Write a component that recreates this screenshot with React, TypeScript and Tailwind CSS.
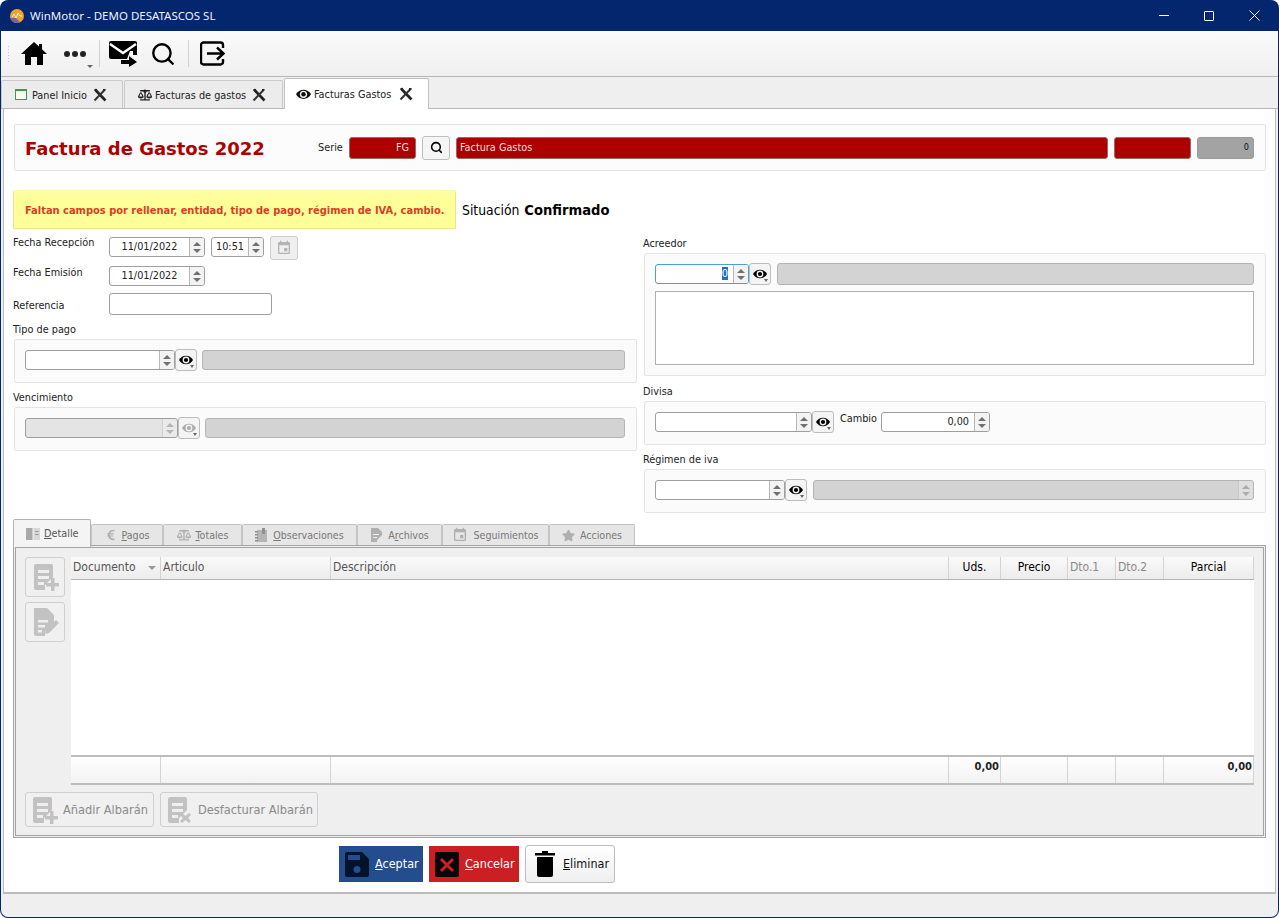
import { ReactNode } from "react";
import { FaBalanceScale, FaEuroSign, FaStar } from "react-icons/fa";
import { MdEvent } from "react-icons/md";
import { Search } from "lucide-react";

const CloseTool = () => (
  <svg width="14" height="14" viewBox="0 0 14 14" className="shrink-0">
    <path d="M2 1.500 12.500 12.500" stroke="#222" strokeWidth="2.600" />
    <path d="M12 1.500 1.500 12.500" stroke="#333" strokeWidth="2" />
    <path d="M1 1l3 0 0 3z M13 1l-3 0 0 3z" fill="#222" />
  </svg>
);

const EyeIcon = ({ w = 14, className = "" }: { w?: number; className?: string }) => (
  <svg width={w} height={(w * 10) / 14} viewBox="0 0 14 10" className={`shrink-0 ${className}`}>
    <path d="M0 5C3-.7 11-.7 14 5 11 10.700 3 10.700 0 5z" fill="currentColor" />
    <circle cx="7" cy="5" r="3.400" fill="#f4f4f4" />
    <circle cx="7" cy="5" r="2.100" fill="currentColor" />
  </svg>
);

const Arrows = ({ light }: { light?: boolean }) => (
  <div
    className={`flex h-full w-[15px] shrink-0 flex-col items-center justify-center gap-[3px] border-l border-[#b8b8b8] bg-[#f3f3f3] ${
      light ? "opacity-40" : ""
    }`}
  >
    <div className="h-0 w-0 border-x-[4px] border-b-[4px] border-x-transparent border-b-[#707070]" />
    <div className="h-0 w-0 border-x-[4px] border-t-[4px] border-x-transparent border-t-[#707070]" />
  </div>
);

const Spin = ({
  w,
  value,
  disabled,
  focused,
  align = "center",
  className = "",
}: {
  w: number;
  value?: ReactNode;
  disabled?: boolean;
  focused?: boolean;
  align?: "center" | "right";
  className?: string;
}) => (
  <div
    className={`flex h-[20px] shrink-0 items-center overflow-hidden rounded-[3px] border ${
      focused ? "border-[#4a9be8]" : "border-[#9e9e9e]"
    } ${disabled ? "bg-[#e4e4e4]" : "bg-white"} ${className}`}
    style={{ width: w }}
  >
    <div className={`flex-1 pt-px ${align === "right" ? "pr-[5px] text-right" : "text-center"}`}>{value}</div>
    <Arrows light={disabled} />
  </div>
);

const EyeBtn = ({ disabled }: { disabled?: boolean }) => (
  <div
    className={`relative flex h-[22px] w-[22px] shrink-0 items-center justify-center rounded-[3px] border border-[#bdbdbd] bg-[#f4f4f4] ${
      disabled ? "text-[#aaa]" : "text-black"
    }`}
  >
    <EyeIcon />
    <div className="absolute bottom-[2px] right-[2px] h-0 w-0 border-x-[2.500px] border-t-[3px] border-x-transparent border-t-[#666]" />
  </div>
);

const Bar = ({ children }: { children?: ReactNode }) => (
  <div className="flex h-full min-w-0 flex-1 items-center justify-end overflow-hidden rounded-[3px] border border-[#b4b4b4] bg-[#d3d3d3]">
    {children}
  </div>
);

const Label = ({ children, className = "" }: { children: ReactNode; className?: string }) => (
  <div className={`h-[14px] leading-[14px] ${className}`}>{children}</div>
);

const Card = ({ h, children, className = "" }: { h: number; children: ReactNode; className?: string }) => (
  <div
    className={`rounded-[2px] border border-[#e4e4e4] bg-[#fbfbfb] pl-[10px] pr-[11px] pt-[9px] ${className}`}
    style={{ height: h }}
  >
    {children}
  </div>
);

const DocIcon = ({ kind }: { kind: "plus" | "edit" | "x" }) => (
  <svg width="30" height="30" viewBox="0 0 30 30" className="shrink-0">
    {kind === "edit" ? (
      <path d="M4 1h13l7 7v8l-9 9v4H6a2 2 0 0 1-2-2z" fill="#c2c2c2" />
    ) : (
      <path d="M6 2h15a2 2 0 0 1 2 2v11l-8 8v5H6a2 2 0 0 1-2-2V4a2 2 0 0 1 2-2z" fill="#c2c2c2" />
    )}
    {kind !== "edit" && <path d="M8 8h11v3H8zM8 14h11v3H8zM8 20h6v3H8z" fill="#efefef" />}
    {kind === "edit" && <path d="M8 13h10v2.500H8zM8 18h7v2.500H8zM8 23h4v2.500H8z" fill="#efefef" />}
    {kind === "plus" && <path d="M21 16h3.500v5H29v3.500h-4.500V29H21v-4.500h-5V21h5z" fill="#c2c2c2" />}
    {kind === "edit" && <path d="M26 13l3 3-10 10-4 1 1-4z" fill="#c2c2c2" />}
    {kind === "x" && <path d="M18 18l3.500 3 3.500-3 2 2-3 3 3 3-2 2-3.500-3-3.500 3-2-2 3-3-3-3z" fill="#c2c2c2" />}
  </svg>
);

const topTabs = [
  {
    text: "Panel Inicio",
    w: 122,
    ml: 0,
    icon: <div className="mr-[5px] h-[11px] w-[12px] border-[1.500px] border-t-[2.500px] border-[#3c9a48] bg-[#f6fbf4]" />,
  },
  { text: "Facturas de gastos", w: 159, ml: 1, icon: <FaBalanceScale size={14} className="mr-[3px] text-[#222]" /> },
];

const lowerTabs = [
  { key: "pagos", w: 72, pre: "", u: "P", post: "agos", icon: <FaEuroSign size={12} /> },
  { key: "totales", w: 79, pre: "", u: "T", post: "otales", icon: <FaBalanceScale size={14} /> },
  {
    key: "obs",
    w: 115,
    pre: "",
    u: "O",
    post: "bservaciones",
    icon: (
      <svg width="13" height="15" viewBox="0 0 13 15">
        <path d="M2 2h10v12H2z" fill="#b5b5b5" />
        <path d="M0 3h3v1.500H0zM0 6h3v1.500H0zM0 9h3v1.500H0zM0 12h3v1.500H0zM7 0h3v6H7z" fill="#8f8f8f" />
      </svg>
    ),
  },
  {
    key: "archivos",
    w: 85,
    pre: "A",
    u: "r",
    post: "chivos",
    icon: (
      <svg width="13" height="15" viewBox="0 0 13 15">
        <path d="M1 0h7l4 4v3l-5 5v2H1z" fill="#b0b0b0" />
        <path d="M3 6h6v1H3zM3 9h4v1H3z" fill="#eee" />
      </svg>
    ),
  },
  { key: "seg", w: 107, pre: "Seguimientos", u: "", post: "", icon: <MdEvent size={16} /> },
  { key: "acc", w: 86, pre: "Acciones", u: "", post: "", icon: <FaStar size={13} /> },
];

const columns = [
  { w: 90, text: "Documento", cls: "pl-[2px] text-[#555]", footer: "" },
  { w: 170, text: "Articulo", cls: "pl-[2px] text-[#555]", footer: "" },
  { w: 618, text: "Descripción", cls: "pl-[2px] text-[#555]", footer: "" },
  { w: 52, text: "Uds.", cls: "justify-center text-black", footer: "0,00" },
  { w: 67, text: "Precio", cls: "justify-center text-black", footer: "" },
  { w: 48, text: "Dto.1", cls: "pl-[2px] text-[#8a8a8a]", footer: "" },
  { w: 48, text: "Dto.2", cls: "pl-[2px] text-[#8a8a8a]", footer: "" },
  { w: 90, text: "Parcial", cls: "justify-center text-black", footer: "0,00" },
];

export default function App() {
  return (
    <div className="flex h-[918px] w-[1279px] flex-col overflow-hidden rounded-[8px] bg-[#04266e] font-['DejaVu_Sans_Condensed','Liberation_Sans',sans-serif] text-[10.800px] text-[#222]">
      {/* Title bar */}
      <div className="flex h-[31px] shrink-0 items-center pl-[10px] pr-[19px] text-white">
        <svg width="14" height="14" viewBox="0 0 14 14" className="shrink-0">
          <circle cx="7" cy="7" r="7" fill="#f0a22e" />
          <path d="M0.500 9A7 7 0 0 0 7 14a7 7 0 0 0 3-.7L6 9z" fill="#7b62a8" />
          <path d="M2 8l2-3 2 4 2-5 2 3h2" stroke="#fff3c8" strokeWidth="1" fill="none" />
        </svg>
        <span className="ml-[6px] font-['Noto_Sans',sans-serif] text-[11.500px] text-[#eef1f8]">
          WinMotor - DEMO DESATASCOS SL
        </span>
        <div className="ml-auto flex items-center gap-[35px]">
          <div className="h-px w-[10px] bg-white" />
          <div className="h-[10px] w-[10px] rounded-[1px] border border-white" />
          <svg width="11" height="11" viewBox="0 0 11 11">
            <path d="M0.500 0.500l10 10M10.500 0.500l-10 10" stroke="#fff" strokeWidth="1" />
          </svg>
        </div>
      </div>

      <div className="mx-px mb-px flex min-h-0 flex-1 flex-col overflow-hidden rounded-b-[7px] bg-[#efefef]">
        {/* Toolbar */}
        <div className="flex h-[46px] shrink-0 items-center border-b border-[#b8b8b8] bg-gradient-to-b from-[#fbfbfb] to-[#efefef] pl-[6px]">
          <div className="h-[18px] w-[4px] bg-[radial-gradient(#c8c8c8_0.700px,transparent_0.800px)] bg-[length:3px_3px]" />
          <svg width="26" height="23" viewBox="0 0 26 23" className="ml-[10px] shrink-0">
            <path d="M13 0l5 4.500V2h3v5.300L26 12h-4v11h-6v-8h-6v8H4V12H0z" fill="#000" />
          </svg>
          <div className="relative ml-[17px] flex h-[30px] w-[35px] items-center gap-[2px]">
            <div className="h-[6px] w-[6px] rounded-full bg-[#222]" />
            <div className="h-[6px] w-[6px] rounded-full bg-[#222]" />
            <div className="h-[6px] w-[6px] rounded-full bg-[#222]" />
            <div className="absolute bottom-[1px] right-[6px] h-0 w-0 border-x-[3px] border-t-[3px] border-x-transparent border-t-[#666]" />
          </div>
          <div className="h-[27px] w-px bg-[#d0d0d0]" />
          <svg width="29" height="26" viewBox="0 0 29 26" className="ml-[9px] shrink-0">
            <path d="M2 0h24a2 2 0 0 1 2 2v12h-4v-4h-3l-3 8H2a2 2 0 0 1-2-2V2a2 2 0 0 1 2-2z" fill="#000" />
            <path d="M1 3l13 9 13-9" stroke="#fff" strokeWidth="2.400" fill="none" />
            <path d="M12 19h8v-4l8 6-8 5v-3h-8z" fill="#000" />
          </svg>
          <Search size={26} strokeWidth={2.200} className="ml-[12px] text-black" />
          <div className="ml-[12px] h-[27px] w-px bg-[#d0d0d0]" />
          <svg width="25" height="25" viewBox="0 0 25 25" className="ml-[11px] shrink-0">
            <path d="M23 7V4a2.500 2.500 0 0 0-2.500-2.500h-17A2.500 2.500 0 0 0 1 4v17a2.500 2.500 0 0 0 2.500 2.500h17A2.500 2.500 0 0 0 23 21v-3" stroke="#000" strokeWidth="2.400" fill="none" />
            <path d="M7 12.500h16M17 6.500l6.500 6-6.500 6" stroke="#000" strokeWidth="2.400" fill="none" />
          </svg>
        </div>

        {/* Window tabs */}
        <div className="flex h-[32px] shrink-0 items-end border-b border-[#b8b8b8]">
          {topTabs.map((t) => (
            <div
              key={t.text}
              className="flex h-[28px] items-center rounded-t-[2px] border border-b-0 border-[#c8c8c8] bg-[#ececec] pl-[13px]"
              style={{ width: t.w, marginLeft: t.ml }}
            >
              {t.icon}
              <span className="mr-[6px] whitespace-nowrap pt-[3px]">{t.text}</span>
              <CloseTool />
            </div>
          ))}
          <div className="relative top-px ml-px flex h-[31px] w-[145px] items-center rounded-t-[2px] border border-b-0 border-[#c0c0c0] bg-white pl-[11px]">
            <EyeIcon w={15} className="mr-[3px] text-[#111]" />
            <span className="mr-[8px] whitespace-nowrap pt-[3px]">Facturas Gastos</span>
            <CloseTool />
          </div>
        </div>

        {/* Main pane */}
        <div className="ml-[2px] mr-[2px] flex h-[785px] shrink-0 flex-col border-x border-b-2 border-[#bcbcbc] bg-white">
          {/* Header */}
          <div className="ml-[10px] mt-[15px] flex h-[47px] w-[1252px] shrink-0 items-center rounded-[2px] border border-[#e2e2e2] bg-[#fcfcfc] pl-[10px]">
            <div className="w-[293px] pt-[2px] font-['DejaVu_Sans',sans-serif] text-[18px] font-bold text-[#ad0000]">
              Factura de Gastos 2022
            </div>
            <span className="w-[31px] pt-px">Serie</span>
            <div className="flex h-[22px] w-[67px] items-center justify-end rounded-[3px] border border-[#9a6a6a] bg-[#ad0000] pr-[6px] pt-[2px] text-[#f0d8d8]">
              FG
            </div>
            <div className="ml-[6px] flex h-[24px] w-[28px] items-center justify-center rounded-[3px] border border-[#bdbdbd] bg-[#f5f5f5]">
              <Search size={13} strokeWidth={2.800} className="text-black" />
            </div>
            <div className="ml-[6px] flex h-[22px] w-[652px] items-center rounded-[3px] border border-[#9a6a6a] bg-[#ad0000] pl-[3px] pt-[2px] text-[#f4dede]">
              Factura Gastos
            </div>
            <div className="ml-[6px] h-[22px] w-[77px] rounded-[3px] border border-[#9a6a6a] bg-[#ad0000]" />
            <div className="ml-[6px] flex h-[22px] w-[57px] items-center justify-end rounded-[3px] border border-[#9a9a9a] bg-[#a3a3a3] pr-[4px] pt-px text-[9px] text-[#012]">
              0
            </div>
          </div>

          {/* Warning */}
          <div className="ml-[9px] mt-[19px] flex shrink-0 items-center">
            <div className="flex h-[39px] w-[443px] items-center whitespace-nowrap border border-t-[4px] border-[#e8e48f] border-t-[#fdfda8] bg-[#ffff99] pl-[11px] text-[11px] font-bold text-[#dc3c26]">
              Faltan campos por rellenar, entidad, tipo de pago, régimen de IVA, cambio.
            </div>
            <div className="ml-[6px] mt-px text-[13.800px] text-black">
              Situación <span className="ml-px text-[14.600px] font-bold">Confirmado</span>
            </div>
          </div>

          {/* Form columns */}
          <div className="mt-[7px] flex h-[277px] shrink-0">
            <div className="ml-[9px] w-[624px]">
              <div className="flex h-[24px]">
                <Label className="w-[96px] shrink-0">Fecha Recepción</Label>
                <Spin w={96} value="11/01/2022" className="mt-px" />
                <Spin w={53} value="10:51" className="ml-[6px] mt-px" />
                <div className="ml-[6px] flex h-[24px] w-[28px] items-center justify-center rounded-[3px] border border-[#cfcfcf] bg-[#efefef] text-[#b4b4b4]">
                  <MdEvent size={16} />
                </div>
              </div>
              <div className="mt-[6px] flex h-[22px]">
                <Label className="w-[96px] shrink-0">Fecha Emisión</Label>
                <Spin w={96} value="11/01/2022" />
              </div>
              <div className="mt-[5px] flex h-[22px]">
                <Label className="mt-[6px] w-[96px] shrink-0">Referencia</Label>
                <div className="h-[22px] w-[163px] rounded-[3px] border border-[#9e9e9e] bg-white" />
              </div>
              <Label className="mt-[7px] pt-px">Tipo de pago</Label>
              <Card h={44} className="ml-px mt-[3px]">
                <div className="flex items-start">
                  <Spin w={150} className="mt-px" />
                  <EyeBtn />
                  <div className="ml-[5px] mt-px flex h-[20px] min-w-0 flex-1"><Bar /></div>
                </div>
              </Card>
              <Label className="mt-[7px] pt-px">Vencimiento</Label>
              <Card h={44} className="ml-px mt-[3px]">
                <div className="flex items-start">
                  <Spin w={153} disabled className="mt-px" />
                  <EyeBtn disabled />
                  <div className="ml-[5px] mt-px flex h-[20px] min-w-0 flex-1"><Bar /></div>
                </div>
              </Card>
            </div>

            <div className="ml-[6px] w-[623px]">
              <Label className="pt-px">Acreedor</Label>
              <Card h={123} className="ml-px mt-[3px]">
                <div className="flex items-start">
                  <Spin
                    w={94}
                    focused
                    align="right"
                    className="mt-px"
                    value={<span className="bg-[#1d6fd0] text-white">0</span>}
                  />
                  <EyeBtn />
                  <div className="ml-[6px] flex h-[22px] min-w-0 flex-1"><Bar /></div>
                </div>
                <div className="mt-[6px] h-[74px] border border-[#b0b0b0] bg-white" />
              </Card>
              <Label className="mt-[8px] pt-px">Divisa</Label>
              <Card h={44} className="ml-px mt-[3px]">
                <div className="flex items-start">
                  <Spin w={157} className="mt-px" />
                  <EyeBtn />
                  <Label className="ml-[6px] w-[41px] pt-px">Cambio</Label>
                  <Spin w={109} value="0,00" align="right" className="mt-px" />
                </div>
              </Card>
              <Label className="mt-[7px] pt-px">Régimen de iva</Label>
              <Card h={44} className="ml-px mt-[3px]">
                <div className="flex items-start">
                  <Spin w={130} className="mt-px" />
                  <EyeBtn />
                  <div className="ml-[6px] mt-px flex h-[20px] min-w-0 flex-1">
                    <Bar>
                      <Arrows light />
                    </Bar>
                  </div>
                </div>
              </Card>
            </div>
          </div>

          {/* Detail tabs */}
          <div className="ml-[9px] mt-[6px] flex h-[26px] w-[1253px] shrink-0 items-end">
            <div className="relative top-[2px] z-10 flex h-[28px] w-[78px] items-center rounded-t-[2px] border border-b-0 border-[#b4b4b4] bg-[#f4f4f4] pl-[12px] text-[#555]">
              <svg width="14" height="12" viewBox="0 0 14 12" className="mr-[4px]">
                <path d="M0 0h6.500v12H0z" fill="#a8a8a8" />
                <path d="M7.500 0H14v12H7.500z" fill="#d8d8d8" />
                <path d="M9 3h3.500v1H9zM9 6h3.500v1H9z" fill="#999" />
              </svg>
              <span className="pt-px"><u>D</u>etalle</span>
            </div>
            {lowerTabs.map((t) => (
              <div
                key={t.key}
                className="flex h-[21px] shrink-0 items-center justify-center gap-[5px] rounded-t-[2px] border border-b-0 border-[#c4c4c4] bg-[#e6e6e6] text-[10.600px] text-[#777]"
                style={{ width: t.w }}
              >
                <span className="flex text-[#b0b0b0]">{t.icon}</span>
                <span className="whitespace-nowrap pt-[2px]">
                  {t.pre}
                  {t.u && <u>{t.u}</u>}
                  {t.post}
                </span>
              </div>
            ))}
          </div>

          <div className="ml-[9px] flex h-[293px] w-[1253px] shrink-0 flex-col border-[3px] border-double border-[#a4a4a4] bg-[#efefef] px-[9px] pt-[9px]">
            <div className="flex h-[228px] shrink-0 gap-[6px]">
              <div className="flex w-[40px] shrink-0 flex-col gap-[5px]">
                <div className="flex h-[40px] items-center justify-center rounded-[3px] border border-[#cfcfcf] bg-[#f0f0f0]">
                  <DocIcon kind="plus" />
                </div>
                <div className="flex h-[40px] items-center justify-center rounded-[3px] border border-[#cfcfcf] bg-[#f0f0f0]">
                  <DocIcon kind="edit" />
                </div>
              </div>
              <div className="flex w-[1183px] shrink-0 flex-col text-[12px]">
                <div className="flex h-[23px] shrink-0 border-b border-[#b4b4b4] bg-gradient-to-b from-[#fafafa] to-[#ececec]">
                  {columns.map((c) => (
                    <div
                      key={c.text}
                      className={`relative flex h-full shrink-0 items-center border-r border-[#d4d4d4] pb-[2px] ${c.cls}`}
                      style={{ width: c.w }}
                    >
                      {c.text}
                      {c.text === "Documento" && (
                        <div className="absolute right-[4px] top-[9px] h-0 w-0 border-x-[4px] border-t-[4px] border-x-transparent border-t-[#999]" />
                      )}
                    </div>
                  ))}
                </div>
                <div className="flex-1 bg-white" />
                <div className="flex h-[30px] shrink-0 border-y-2 border-[#bdbdbd] bg-gradient-to-b from-white to-[#f2f2f2] text-[11px]">
                  {columns.map((c) => (
                    <div
                      key={c.text}
                      className="h-full shrink-0 border-r border-[#d4d4d4] pr-px pt-[2px] text-right font-bold"
                      style={{ width: c.w }}
                    >
                      {c.footer}
                    </div>
                  ))}
                </div>
              </div>
            </div>
            <div className="mt-[7px] flex gap-[6px] whitespace-nowrap text-[12.700px] text-[#8a8a8a]">
              <div className="flex h-[35px] w-[129px] items-center gap-[4px] rounded-[3px] border border-[#cfcfcf] bg-[#f0f0f0] pl-[3px]">
                <DocIcon kind="plus" />
                <span className="pt-px">Añadir Albarán</span>
              </div>
              <div className="flex h-[35px] w-[158px] items-center gap-[4px] rounded-[3px] border border-[#cfcfcf] bg-[#f0f0f0] pl-[3px]">
                <DocIcon kind="x" />
                <span className="pt-px">Desfacturar Albarán</span>
              </div>
            </div>
          </div>

          {/* Actions */}
          <div className="ml-[335px] mt-[7px] flex h-[38px] shrink-0 items-center gap-[6px] text-[12.500px]">
            <div className="flex h-[36px] w-[84px] items-center bg-[#234d8c] pl-[6px] text-white">
              <svg width="24" height="25" viewBox="0 0 24 25" className="mr-[6px] shrink-0">
                <path d="M2 0h15l7 7v16a2 2 0 0 1-2 2H2a2 2 0 0 1-2-2V2a2 2 0 0 1 2-2z" fill="#04122c" />
                <path d="M3 3h12v5H3z" fill="#234d8c" />
                <circle cx="12" cy="17.500" r="3.500" fill="#234d8c" />
              </svg>
              <span className="pt-px"><u>A</u>ceptar</span>
            </div>
            <div className="flex h-[36px] w-[90px] items-center bg-[#cc1f24] pl-[6px] text-white">
              <svg width="24" height="25" viewBox="0 0 24 25" className="mr-[6px] shrink-0">
                <rect width="24" height="25" rx="2" fill="#0a0506" />
                <path d="M6 7l12 12M18 7 6 19" stroke="#cc1f24" strokeWidth="3" />
              </svg>
              <span className="pt-px"><u>C</u>ancelar</span>
            </div>
            <div className="flex h-[38px] w-[90px] items-center rounded-[3px] border border-[#bcbcbc] bg-gradient-to-b from-white to-[#efefef] pl-[9px] text-[#111]">
              <svg width="20" height="26" viewBox="0 0 20 26" className="mr-[8px] shrink-0">
                <path d="M0 2h7V0h6v2h7v2.500H0zM2 6h16v18a2 2 0 0 1-2 2H4a2 2 0 0 1-2-2z" fill="#000" />
              </svg>
              <span className="pt-px"><u>E</u>liminar</span>
            </div>
          </div>
        </div>
      </div>
    </div>
  );
}
